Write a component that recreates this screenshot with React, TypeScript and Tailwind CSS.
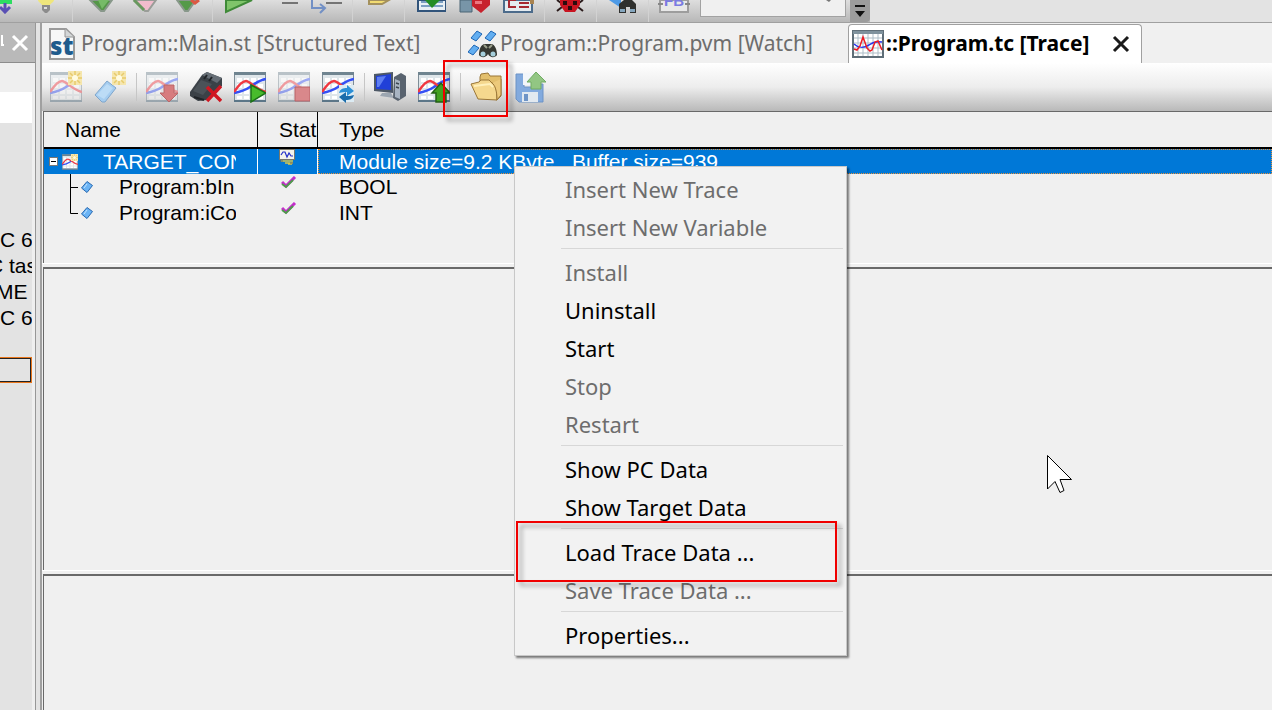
import { useState } from 'react';
import type { ReactNode } from 'react';

interface MenuEntry {
  label: string;
  enabled: boolean;
}

interface TraceRow {
  name: string;
  type: string;
}

const menuGroups: MenuEntry[][] = [
  [
    { label: 'Insert New Trace', enabled: false },
    { label: 'Insert New Variable', enabled: false },
  ],
  [
    { label: 'Install', enabled: false },
    { label: 'Uninstall', enabled: true },
    { label: 'Start', enabled: true },
    { label: 'Stop', enabled: false },
    { label: 'Restart', enabled: false },
  ],
  [
    { label: 'Show PC Data', enabled: true },
    { label: 'Show Target Data', enabled: true },
  ],
  [
    { label: 'Load Trace Data ...', enabled: true },
    { label: 'Save Trace Data ...', enabled: false },
  ],
  [{ label: 'Properties...', enabled: true }],
];

const variables: TraceRow[] = [
  { name: 'Program:bIn', type: 'BOOL' },
  { name: 'Program:iCo', type: 'INT' },
];

/* ---------- icons ---------- */

function Chart({ faded, children }: { faded?: boolean; children?: ReactNode }) {
  return (
    <svg viewBox="0 0 32 32" className="h-full w-full" aria-hidden="true">
      <g opacity={faded ? 0.45 : 1}>
        <rect x="0.5" y="1.5" width="31" height="29" fill="#dfe6ea" stroke="#7d8c96" />
        <path d="M0 1h32v3H0z" fill="#6f8490" />
        <path d="M3 7h5v4H3zM10 7h5v4h-5zM17 7h5v4h-5zM24 7h5v4h-5zM3 13h5v4H3zM10 13h5v4h-5zM17 13h5v4h-5zM24 13h5v4h-5zM3 19h5v4H3zM10 19h5v4h-5zM17 19h5v4h-5zM24 19h5v4h-5zM3 25h5v3H3zM10 25h5v3h-5zM17 25h5v3h-5zM24 25h5v3h-5z" fill="#fff" />
        <path d="M0 29h32v2H0z" fill="#5c7688" />
        <path d="M0 22C6 21 10 20 16 16C22 12 25 9 32 8" fill="none" stroke="#3450f5" strokeWidth="2.5" />
        <path d="M0 21C4 15 8 10 12 10C16 10 21 18 32 21" fill="none" stroke="#f03840" strokeWidth="2.5" />
      </g>
      {children}
    </svg>
  );
}

function Sparkle() {
  return (
    <g>
      <path d="M18 0h14v14H18z" fill="#f5e6ae" />
      <path d="M25 0v14M18 7h14M20 2l10 10M30 2L20 12" stroke="#e8cb6c" strokeWidth="1.5" />
      <circle cx="25" cy="7" r="3" fill="#fffbe2" />
    </g>
  );
}

function NewVariableIcon() {
  return (
    <svg viewBox="0 0 32 32" className="h-full w-full" aria-hidden="true">
      <path d="M1 24L13 10L22 17L11 31L8 31z" fill="#a5cdf0" stroke="#7fa6cc" />
      <path d="M3 24L13 13L19 17L10 28z" fill="#bcdcf6" />
      <Sparkle />
    </svg>
  );
}

function DisconnectIcon() {
  return (
    <svg viewBox="0 0 32 32" className="h-full w-full" aria-hidden="true">
      <path d="M0 21L12 4L17 1L32 7V15L17 29L8 30L0 25z" fill="#3b4147" />
      <path d="M12 4L17 1L32 7L27 12z" fill="#666e76" />
      <path d="M3 20L11 9L22 13L13 24z" fill="#4b5258" />
      <path d="M4 26L14 29M17 4L14 8M22 6L19 10" stroke="#202428" strokeWidth="2" />
      <path d="M17 16L31 30M31 15L17 30" stroke="#d01722" strokeWidth="3.5" />
    </svg>
  );
}

function PcIcon() {
  return (
    <svg viewBox="0 0 32 32" className="h-full w-full" aria-hidden="true">
      <path d="M0 3L19 1V22L0 20z" fill="#4d5866" />
      <path d="M2 5L17 3V19L2 18z" fill="#2140d8" />
      <path d="M3 6L12 5L5 16L3 16z" fill="#5f7ff2" />
      <path d="M8 22L17 22L20 27L6 25z" fill="#9ca6b1" />
      <path d="M20 6L27 2L32 5V25L24 30L19 27z" fill="#59636f" />
      <path d="M21 8L26 10V28L21 26z" fill="#a8b4c2" />
      <path d="M22 12l3 1M22 16l3 1" stroke="#3d4651" strokeWidth="1.5" />
    </svg>
  );
}

function FolderIcon() {
  return (
    <svg viewBox="0 0 32 32" className="h-full w-full" aria-hidden="true">
      <path d="M10 6L11 3L18 2L20 5L31 5V25L27 29L10 24z" fill="#e3bf6c" stroke="#9a7637" />
      <path d="M1 13L9 11L11 9L19 9L22 12L26 13L27 29L8 28z" fill="#f5d88e" stroke="#9a7637" />
      <path d="M4 15L20 13L23 16" fill="none" stroke="#fff0bb" strokeWidth="2" />
      <path d="M22 12C25 14 27 20 27 29L31 24V8" fill="#edca7b" stroke="#9a7637" />
    </svg>
  );
}

function SaveIcon() {
  return (
    <svg viewBox="0 0 32 32" className="h-full w-full" aria-hidden="true">
      <path d="M2 3h8v13h14v-3h5v18H5l-3-3z" fill="#82aade" stroke="#6d93c6" />
      <path d="M9 2h12v12H9z" fill="#f2f6fa" />
      <path d="M8 21h16v10H8z" fill="#e2e9f0" />
      <path d="M10 23h4v7h-4z" fill="#6e94c6" />
      <path d="M22 1L32 11H27V18H17V11H13z" fill="#92c683" stroke="#70ab63" />
    </svg>
  );
}

function StIcon() {
  return (
    <svg viewBox="0 0 26 32" className="h-8 w-[26px]" aria-hidden="true">
      <path d="M1 1H17L25 9V31H1z" fill="#f7f8f8" stroke="#9a9a9a" strokeWidth="2" />
      <path d="M16 1V9H25" fill="#d4d7d8" stroke="#969696" />
      <text x="1" y="27" fontFamily="Open Sans, sans-serif" fontWeight="800" fontSize="24" fill="#1e5b8c">st</text>
    </svg>
  );
}

function WatchIcon() {
  return (
    <svg viewBox="0 0 30 28" className="h-7 w-[30px]" aria-hidden="true">
      <g fill="#62aef1" stroke="#1e66b4">
        <path d="M3 8L9 1L14 4L8 11z" />
        <path d="M17 8L23 1L28 4L22 11z" />
        <path d="M0 22L6 15L11 18L5 25z" />
      </g>
      <path d="M11 25C11 19 13 14 17 14H23C27 14 29 20 29 25C27 28 22 28 20 24C18 28 13 28 11 25z" fill="#363832" />
      <path d="M16 15l3 3M24 15l-3 3" stroke="#9ba08c" strokeWidth="2" />
      <circle cx="15" cy="24" r="2.5" fill="#a5cfdc" />
      <circle cx="25" cy="24" r="2.5" fill="#a5cfdc" />
    </svg>
  );
}

function TraceTabIcon() {
  return (
    <svg viewBox="0 0 32 28" className="h-7 w-8" aria-hidden="true">
      <rect x="1" y="1" width="30" height="26" fill="#fff" stroke="#5f6e78" strokeWidth="2" />
      <path d="M1 1h30v3H1z" fill="#7f929d" />
      <path d="M6 4v22M11 4v22M16 4v22M21 4v22M26 4v22M2 8h28M2 13h28M2 18h28M2 23h28" stroke="#adbdc7" />
      <path d="M2 14C6 18 12 18 17 15C21 12 25 11 30 12" fill="none" stroke="#2834ee" strokeWidth="1.5" />
      <path d="M2 19L5 20L8 16L11 7L15 18L18 21L20 20L23 12L26 11L30 20" fill="none" stroke="#ed1c24" strokeWidth="1.5" />
    </svg>
  );
}

function VariableIcon() {
  return (
    <svg viewBox="0 0 12 12" className="h-3 w-3 shrink-0" aria-hidden="true">
      <path d="M0.5 7L6 0.5L11.5 4.5L6 11.5z" fill="#6bb4f5" stroke="#2868b0" />
      <path d="M3 7L6 3" stroke="#c3e3ff" />
    </svg>
  );
}

function CheckIcon() {
  return (
    <svg viewBox="0 0 16 14" className="h-[14px] w-4" aria-hidden="true">
      <path d="M1 6L5 10L14 1" fill="none" stroke="#c42ccc" strokeWidth="3" />
      <path d="M1 8L5 11L12 4" fill="none" stroke="#4f9a4c" strokeWidth="2" />
    </svg>
  );
}

function OnlineIcon() {
  return (
    <svg viewBox="0 0 16 16" className="h-4 w-4" aria-hidden="true">
      <rect x="0.5" y="0.5" width="15" height="10" fill="#f4f4ec" stroke="#77786c" />
      <path d="M2 6L4 3L6 3L8 8L10 4L12 7H14" fill="none" stroke="#2230c8" strokeWidth="1.2" />
      <path d="M2 12h12M6 14h8M9 15h4" stroke="#d3c54e" strokeWidth="1.5" />
      <path d="M1 12h3M11 14h3" stroke="#6a6b60" />
    </svg>
  );
}

// Only the lower part of each main toolbar icon is visible.
const mainIcons: (ReactNode | null)[] = [
  <g key="down">
    <path d="M13 0h13v4H13z" fill="#2ddd62" />
    <path d="M19 3v9M14 7l5 5l5-5" stroke="#5a50b4" strokeWidth="3" fill="none" />
  </g>,
  <g key="bulb">
    <path d="M8 0h16c0 2-3 3-4 5h-8c-1-2-4-3-4-5z" fill="#efe67c" />
    <path d="M12 5h8v5l-3 3h-2l-3-3z" fill="#8c8c8c" />
    <path d="M14 7h3v2h-3z" fill="#ddd" />
  </g>,
  null,
  <g key="green">
    <path d="M8 0h22L22 11h-3z" fill="#549747" stroke="#88988a" strokeWidth="2" />
    <path d="M16 0h11L20 9z" fill="#76bb67" />
  </g>,
  <g key="pink">
    <path d="M8 0h22L22 11h-3z" fill="#f1bccc" stroke="#9a9d98" strokeWidth="2" />
    <path d="M8 0l10 10" stroke="#68985f" strokeWidth="3" />
  </g>,
  <g key="check">
    <path d="M7 0h19L18 11h-3z" fill="#559a49" stroke="#88988a" strokeWidth="2" />
    <path d="M21 0l4 3l4-3" stroke="#dc5844" strokeWidth="3" fill="none" />
  </g>,
  null,
  <path key="play" d="M4 0V12L30 0z" fill="#7fc46a" stroke="#3f8a38" strokeWidth="2" />,
  <path key="step" d="M16 3h16" stroke="#747474" strokeWidth="2" />,
  <g key="over">
    <path d="M16 3h16" stroke="#747474" strokeWidth="2" />
    <path d="M2 0v8h13M10 4l5 4l-5 5" stroke="#7290c5" strokeWidth="2" fill="none" />
  </g>,
  null,
  <path key="hand" d="M7 0V4H20L27 0z" fill="#f2dc72" stroke="#a4915d" strokeWidth="2" />,
  null,
  <g key="install">
    <path d="M4 0h28v11H4z" fill="#e8eff4" stroke="#31547b" strokeWidth="2" />
    <path d="M7 2h22M7 6h22" stroke="#7b9fc2" strokeWidth="2" />
    <path d="M11 0h15L18 8z" fill="#228d24" />
  </g>,
  <g key="heart">
    <path d="M2 0h12v12H2z" fill="#7895a8" stroke="#4a6474" />
    <path d="M14 0h19v4L23 13L14 6z" fill="#c7222c" />
    <path d="M17 1h7v3h-7z" fill="#ed7780" />
  </g>,
  <g key="config">
    <path d="M2 0h28v12H2z" fill="#e4ebf0" stroke="#4c6b8b" strokeWidth="2" />
    <path d="M14 0H7v7h7M17 3h10M17 7h10" stroke="#a62832" strokeWidth="2" fill="none" />
    <path d="M28 0h4v4h-4z" fill="#a98451" />
  </g>,
  null,
  <g key="bug">
    <path d="M3 0l4 3M3 11l5-4M29 0l-4 3M29 11l-5-4" stroke="#2a1a1a" strokeWidth="2" />
    <path d="M6 0h20v5l-5 7H11L6 5z" fill="#c81420" />
    <path d="M9 1h4v4H9zM19 1h4v4h-4zM14 6h4v4h-4z" fill="#2c0c0e" />
  </g>,
  null,
  <g key="find">
    <path d="M3 0h12v8z" fill="#4d9ae6" />
    <path d="M13 13V4l5-4h8l4 4v9h-6V7h-4v6z" fill="#2f302e" />
    <path d="M14 9h5v3h-5zM24 9h5v3h-5z" fill="#85a6be" />
  </g>,
  null,
  <g key="fb">
    <path d="M2 0h28v12H2z" fill="#e8e8e8" stroke="#9d9d9d" strokeWidth="2" />
    <text x="6" y="6" fontFamily="Liberation Sans, sans-serif" fontWeight="700" fontSize="15" fill="#7a7ae2">FB</text>
    <path d="M0 4h5M27 4h5" stroke="#878787" strokeWidth="2" />
  </g>,
];

const traceTools: ({ label: string; icon: ReactNode } | null)[] = [
  { label: 'Insert new trace', icon: <Chart faded><Sparkle /></Chart> },
  { label: 'Insert new variable', icon: <NewVariableIcon /> },
  null,
  {
    label: 'Install',
    icon: <Chart faded><path d="M18 14h10v8h4L23 31L14 22h4z" fill="#d77c7e" stroke="#b96668" /></Chart>,
  },
  { label: 'Uninstall', icon: <DisconnectIcon /> },
  {
    label: 'Start',
    icon: <Chart><path d="M17 14L32 22L17 31z" fill="#48bb2b" stroke="#1c7017" strokeWidth="1.5" /></Chart>,
  },
  {
    label: 'Stop',
    icon: <Chart faded><path d="M17 16h15v14H17z" fill="#d9888b" stroke="#b86367" /></Chart>,
  },
  {
    label: 'Restart',
    icon: (
      <Chart>
        <path d="M17 14h15v17H17z" fill="#dcebf3" />
        <path d="M17 22c1-4 4-5 8-5v-3l7 6l-7 5v-4c-3 0-5 0-8 1z" fill="#2b8fd6" />
        <path d="M32 24c-1 4-4 5-8 5v3l-7-6l7-5v4c3 0 5 0 8-1z" fill="#1b6cab" />
      </Chart>
    ),
  },
  null,
  { label: 'Show PC data', icon: <PcIcon /> },
  {
    label: 'Show target data',
    icon: <Chart><path d="M23 12L32 22H28V31H18V22H14z" fill="#42a01f" stroke="#235f14" strokeWidth="1.5" /></Chart>,
  },
  null,
  { label: 'Load trace data', icon: <FolderIcon /> },
  { label: 'Save trace data', icon: <SaveIcon /> },
];

/* ---------- page parts ---------- */

function ToolSeparator() {
  return (
    <span className="flex w-2 shrink-0 justify-center self-stretch">
      <span className="w-px bg-[#d2d2d2]" />
    </span>
  );
}

function MainToolbar() {
  return (
    <div className="flex h-[23px] shrink-0 overflow-hidden border-b border-[#a0a0a0] bg-[#e3e3e3]">
      <div className="-ml-5 flex bg-linear-to-b from-[#dedede] to-[#b8b8b8]">
        {mainIcons.map((icon, i) =>
          icon ? (
            <button key={i} type="button" aria-label={`Tool ${i + 1}`} className="flex w-11 shrink-0 justify-center">
              <svg viewBox="0 0 32 14" className="h-[14px] w-8">{icon}</svg>
            </button>
          ) : (
            <ToolSeparator key={i} />
          )
        )}
        <div className="ml-1 flex h-[17px] w-[146px] shrink-0 justify-end overflow-hidden border border-t-0 border-[#a2a2a2] bg-[#f0f0f0]">
          <select aria-label="Watch target" className="h-full w-full appearance-none bg-transparent" />
          <svg viewBox="0 0 8 4" className="mr-3 h-1 w-2 shrink-0">
            <path d="M1 0h5L4 2z" fill="#777" />
          </svg>
        </div>
        <button type="button" aria-label="More tools" className="ml-1 flex w-5 shrink-0 justify-center rounded-br bg-[#9c9c9c]">
          <svg viewBox="0 0 12 20" className="h-5 w-3">
            <path d="M1 5h10v2H1zM1 11h10L6 17z" fill="#111" />
          </svg>
        </button>
      </div>
    </div>
  );
}

function SidePanel() {
  return (
    <aside className="flex w-9 shrink-0 flex-col overflow-hidden border-r border-[#979797] bg-[#efefef]">
      <div className="flex h-10 shrink-0 items-center justify-end border-b border-[#8c8c8c] bg-[#b9b9b9] pr-1">
        <svg viewBox="0 0 6 16" className="mr-1 h-4 w-[6px] shrink-0">
          <path d="M0 10h3M1 0v10" stroke="#fff" strokeWidth="2" />
        </svg>
        <button type="button" aria-label="Close panel" className="mr-0.5 shrink-0">
          <svg viewBox="0 0 18 18" className="h-[18px] w-[18px]">
            <path d="M2 2L16 16M16 2L2 16" stroke="#fff" strokeWidth="3" />
          </svg>
        </button>
      </div>
      <div className="h-[29px] shrink-0" />
      <div className="h-[31px] w-8 shrink-0 bg-white" />
      <div className="w-8 flex-1 overflow-hidden bg-[#e3e3e3] pt-[104px] text-[21px] leading-[26px] whitespace-nowrap">
        <p>C 6</p>
        <p className="-ml-3">C tas</p>
        <p className="-ml-1">ME a</p>
        <p>C 6</p>
        <div className="mt-[26px] h-[26px] border border-l-0 border-[#e8751a]">
          <div className="h-full border border-l-0 border-[#222]" />
        </div>
      </div>
    </aside>
  );
}

function TabStrip() {
  return (
    <div role="tablist" className="flex h-10 shrink-0 items-stretch bg-[#f0f0f0] pt-px font-['Noto_Sans','Open_Sans',sans-serif] text-[21px] whitespace-nowrap text-[#6d6d6d]">
      <button type="button" role="tab" aria-selected="false" className="flex w-[418px] shrink-0 items-center gap-1.5 pl-[7px]">
        <StIcon />
        <span>Program::Main.st [Structured Text]</span>
      </button>
      <div className="my-1 w-px shrink-0 bg-[#a0a0a0]" />
      <button type="button" role="tab" aria-selected="false" className="flex w-[387px] shrink-0 items-center gap-0.5 pl-[7px]">
        <WatchIcon />
        <span>Program::Program.pvm [Watch]</span>
      </button>
      <div className="flex w-[294px] shrink-0 items-center rounded-t border border-b-0 border-[#a0a0a0] bg-white pl-[3px] text-black">
        <button type="button" role="tab" aria-selected="true" className="flex flex-1 items-center gap-0.5 font-bold">
          <TraceTabIcon />
          <span>::Program.tc [Trace]</span>
        </button>
        <button type="button" aria-label="Close tab" className="mr-[11px]">
          <svg viewBox="0 0 18 18" className="h-[18px] w-[18px]">
            <path d="M2 2L16 16M16 2L2 16" stroke="#1a1a1a" strokeWidth="3" />
          </svg>
        </button>
      </div>
    </div>
  );
}

function TraceToolbar() {
  return (
    <div className="flex h-12 shrink-0 items-center bg-linear-to-b from-white via-[#ededed] to-[#b9b9b9] pl-0.5">
      {traceTools.map((tool, i) =>
        tool ? (
          <button key={tool.label} type="button" aria-label={tool.label} className="h-8 w-11 shrink-0 px-1.5">
            {tool.icon}
          </button>
        ) : (
          <span key={i} className="flex h-7 w-2 shrink-0 justify-center">
            <span className="w-px bg-[#c6c6c6]" />
          </span>
        )
      )}
    </div>
  );
}

function TraceTable() {
  return (
    <table className="w-full table-fixed border-separate border-spacing-0 text-left text-[21px] leading-[26px] whitespace-nowrap">
      <colgroup>
        <col className="w-[214px]" />
        <col className="w-[60px]" />
        <col />
      </colgroup>
      <thead>
        <tr className="h-[37px]">
          <th className="border-r border-b-2 border-black p-0 pl-[21px] font-normal">Name</th>
          <th className="overflow-hidden border-r border-b-2 border-black p-0 pl-[21px] font-normal">Stat</th>
          <th className="border-b-2 border-black p-0 pl-[21px] font-normal">Type</th>
        </tr>
      </thead>
      <tbody>
        <tr className="h-[25px] bg-[#0078d7] text-white">
          <td className="border-r border-white p-0">
            <div className="flex h-[25px] items-center pl-[5px]">
              <button type="button" aria-label="Collapse" aria-expanded="true" className="flex h-[9px] w-[9px] shrink-0 items-center justify-center border border-[#777] bg-white">
                <span className="h-px w-[5px] bg-black" />
              </button>
              <span className="ml-1 h-4 w-4 shrink-0">
                <Chart><Sparkle /></Chart>
              </span>
              <span className="ml-[25px] w-[133px] overflow-hidden">TARGET_CON</span>
            </div>
          </td>
          <td className="border-r border-white p-0 pl-[21px]">
            <div className="flex h-[25px] items-start"><OnlineIcon /></div>
          </td>
          <td className="p-0">
            <div className="h-[25px] overflow-hidden border border-dotted border-[#e8923c] pl-5 leading-6">
              Module size=9.2 KByte , Buffer size=939
            </div>
          </td>
        </tr>
        {variables.map((row, i) => (
          <tr key={row.name} className="h-[26px]">
            <td className="p-0">
              <div className="flex h-[26px] items-center pl-[26px]">
                <svg viewBox="0 0 8 26" className="h-[26px] w-2 shrink-0">
                  <path d={i === variables.length - 1 ? 'M0.5 0V13.5H8' : 'M0.5 0V26M0 13.5H8'} fill="none" stroke="#000" />
                </svg>
                <span className="ml-[3px] flex"><VariableIcon /></span>
                <span className="ml-[26px] w-[117px] overflow-hidden">{row.name}</span>
              </div>
            </td>
            <td className="p-0 pl-[23px]">
              <div className="flex h-[26px] items-start pt-0.5"><CheckIcon /></div>
            </td>
            <td className="p-0 pl-[21px]">{row.type}</td>
          </tr>
        ))}
      </tbody>
    </table>
  );
}

function ContextMenu({ onSelect }: { onSelect: (label: string) => void }) {
  return (
    <div role="menu" className="absolute top-[166px] left-[514px] w-[333px] border border-[#c8c8c8] bg-[#f2f2f2] pt-[3px] pb-px shadow-[2px_2px_2px_rgba(0,0,0,0.5)]">
      {menuGroups.map((group, i) => (
        <div key={group[0].label} role="group">
          {i > 0 && <div className="mt-0.5 mr-[3px] ml-[46px] h-[5px] border-t border-[#d7d7d7]" />}
          {group.map((entry) => (
            <button
              key={entry.label}
              type="button"
              role="menuitem"
              disabled={!entry.enabled}
              onClick={() => onSelect(entry.label)}
              className="block h-[38px] w-full pl-[50px] text-left font-['Noto_Sans','Open_Sans',sans-serif] text-[22px] leading-[38px] text-black disabled:text-[#6d6d6d]"
            >
              {entry.label}
            </button>
          ))}
        </div>
      ))}
    </div>
  );
}

export default function App() {
  const [menuOpen, setMenuOpen] = useState(true);

  return (
    <div className="relative flex h-screen flex-col overflow-hidden bg-[#e3e3e3] font-['Liberation_Sans',Arial,sans-serif] text-black">
      <MainToolbar />
      <div className="flex min-h-0 flex-1">
        <SidePanel />
        <main className="ml-1 flex min-w-0 flex-1 flex-col border-l-2 border-[#a0a0a0] bg-[#f0f0f0]">
          <TabStrip />
          <TraceToolbar />
          <section className="ml-px h-[152px] shrink-0 overflow-hidden border-t border-l border-[#696969]">
            <TraceTable />
          </section>
          <div className="h-1 shrink-0 border-t border-white" />
          <section className="ml-px h-[303px] shrink-0 border-t-2 border-l border-[#696969]" />
          <div className="h-1 shrink-0 border-t border-white" />
          <section className="ml-px flex-1 border-t-2 border-l border-[#696969]" />
        </main>
      </div>

      {menuOpen && <ContextMenu onSelect={() => setMenuOpen(false)} />}

      {/* Callouts around the two ways to load a trace */}
      <div className="pointer-events-none absolute top-[60px] left-[443px] h-[57px] w-[65px] border-2 border-[#f00000] drop-shadow-[4px_4px_2px_rgba(0,0,0,0.35)]" />
      <div className="pointer-events-none absolute top-[521px] left-[516px] h-[61px] w-[321px] border-2 border-[#f00000] drop-shadow-[4px_4px_2px_rgba(0,0,0,0.35)]" />

      <svg viewBox="0 0 26 40" className="pointer-events-none absolute top-[454px] left-[1047px] h-10 w-[26px]">
        <path d="M0.5 1.5V35L8 27.5L13 38.5L17 36.5L13 25.5H24.5z" fill="#fff" stroke="#000" />
      </svg>
    </div>
  );
}
